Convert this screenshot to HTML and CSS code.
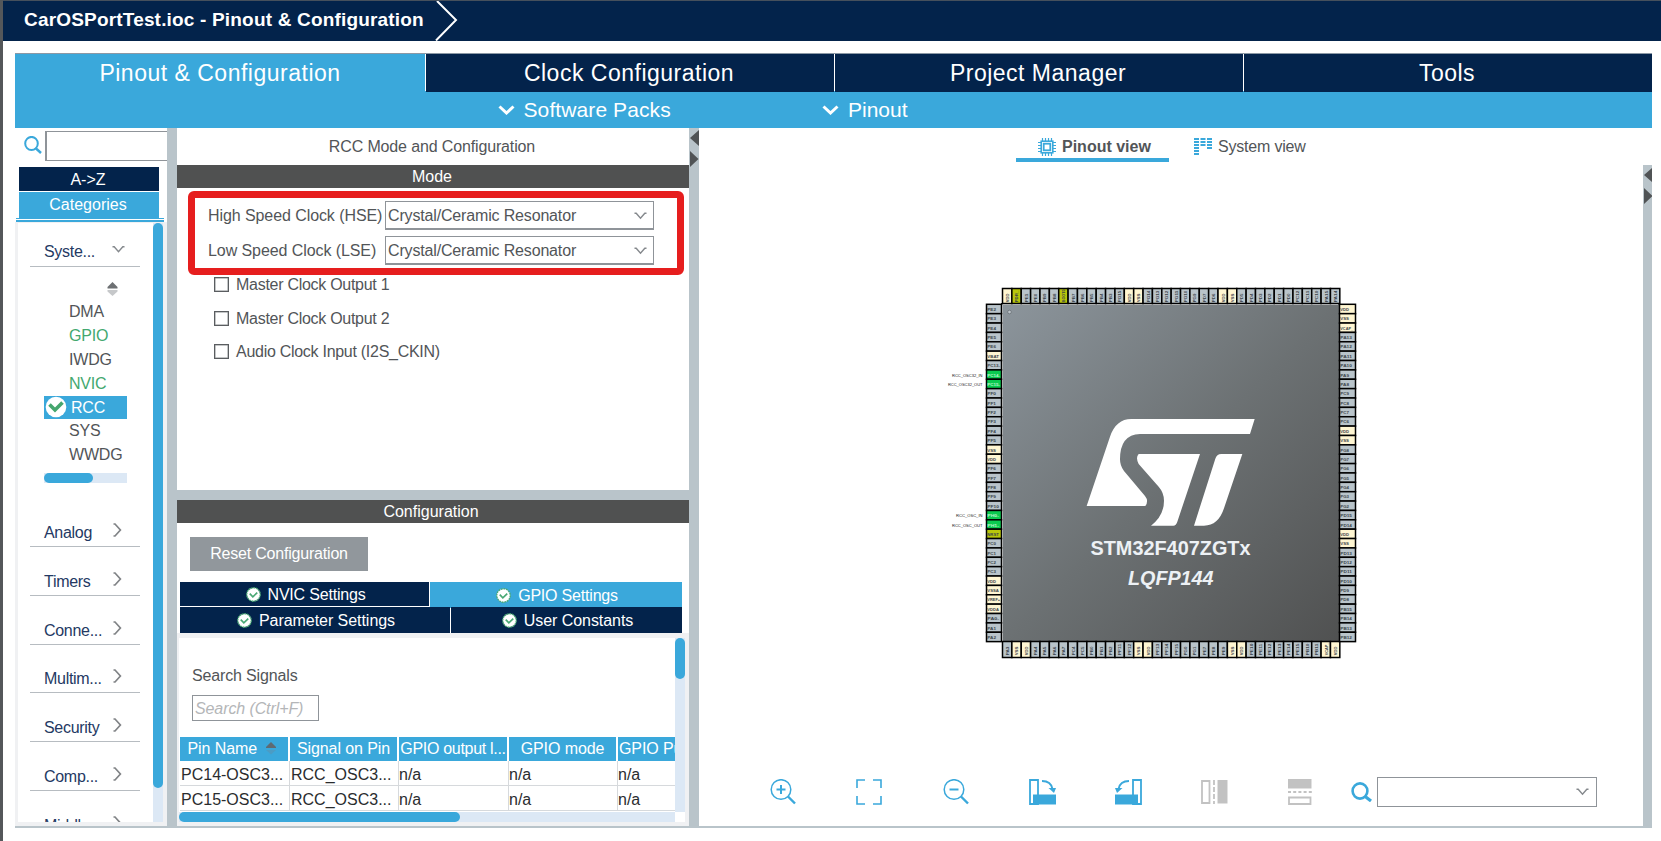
FILE: index.html
```
<!DOCTYPE html>
<html lang="en">
<head>
<meta charset="utf-8">
<title>CarOSPortTest.ioc - Pinout &amp; Configuration</title>
<link rel="stylesheet" href="styles.css">
</head>
<body>
<svg class="defs" width="0" height="0">
  <symbol id="down" viewBox="0 0 13 7"><path d="M.5 .8H2.2L6.5 5.8L10.8 .8H12.5" fill="none" stroke="#85898d" stroke-width="1.4"/></symbol>
  <symbol id="right" viewBox="0 0 9 14"><path d="M.5 1H2L7.4 7L2 13H.5" fill="none" stroke="#808386" stroke-width="1.7"/></symbol>
  <symbol id="bold-down" viewBox="0 0 16 10"><path d="M1 1.5L8 8L15 1.5" fill="none" stroke="#fff" stroke-width="3"/></symbol>
  <symbol id="lens" viewBox="0 0 18 18"><ellipse cx="7.5" cy="7.5" rx="6.3" ry="6.6" fill="none" stroke="#3aa8db" stroke-width="2"/><path d="M11.5 12L17 17" stroke="#3aa8db" stroke-width="2.4"/></symbol>
  <symbol id="ok" viewBox="0 0 16 16"><circle cx="8" cy="8" r="7.2" fill="#fff" stroke="#4aa975" stroke-width="1.4" stroke-dasharray="2 .8"/><path d="M4 7L7.3 10.4L12 6" fill="none" stroke="#4aa975" stroke-width="1.8"/></symbol>
  <symbol id="arrows" viewBox="0 0 10 37"><path d="M10 0V16L1 8Z M1 21V37L9.5 29Z" fill="#505355"/></symbol>
</svg>

<header class="titlebar"><h1>CarOSPortTest.ioc - Pinout &amp; Configuration</h1><svg width="24" height="40" viewBox="0 0 24 40"><path d="M3 0L22 19L2 39.5" fill="none" stroke="#fff" stroke-width="2"/></svg></header>

<main class="app">
  <nav class="main-tabs"><a class="active">Pinout &amp; Configuration</a><a>Clock Configuration</a><a>Project Manager</a><a>Tools</a></nav>
  <div class="subbar">
    <span class="packs"><svg width="17" height="10"><use href="#bold-down"/></svg>Software Packs</span>
    <span class="pinout"><svg width="17" height="10"><use href="#bold-down"/></svg>Pinout</span>
  </div>
  <div class="columns">
    <aside class="sidebar">
      <div class="side-search"><svg width="18" height="18"><use href="#lens"/></svg><div class="side-input"></div></div>
      <div class="az">A-&gt;Z</div>
      <div class="cats">Categories</div>
      <div class="cats-line"></div>
      <div class="side-body">
        <div class="list">
          <div class="group first"><span>Syste...</span><svg width="13" height="7"><use href="#down"/></svg></div>
          <svg class="sort" width="11" height="14" viewBox="0 0 11 14"><path d="M5.5 0L10.5 5V6.5H.5V5Z" fill="#6d7073"/><path d="M.5 8H10.5V9.5L5.5 14L.5 9.5Z" fill="#c6c8ca"/></svg>
          <ul class="items">
            <li>DMA</li><li class="green">GPIO</li><li>IWDG</li><li class="green">NVIC</li>
            <li class="sel"><svg width="22" height="22" viewBox="0 0 22 22"><circle cx="11" cy="11" r="10.3" fill="#fff"/><path d="M4.5 8.5L10 14L17.5 6.5" fill="none" stroke="#45a66e" stroke-width="3.6"/></svg>RCC</li>
            <li>SYS</li><li>WWDG</li>
          </ul>
          <div class="mini-track"><div class="thumb"></div></div>
          <div class="group"><span>Analog</span><svg width="9" height="14"><use href="#right"/></svg></div>
          <div class="group"><span>Timers</span><svg width="9" height="14"><use href="#right"/></svg></div>
          <div class="group"><span>Conne...</span><svg width="9" height="14"><use href="#right"/></svg></div>
          <div class="group"><span>Multim...</span><svg width="9" height="14"><use href="#right"/></svg></div>
          <div class="group"><span>Security</span><svg width="9" height="14"><use href="#right"/></svg></div>
          <div class="group"><span>Comp...</span><svg width="9" height="14"><use href="#right"/></svg></div>
          <div class="group"><span>Middle...</span><svg width="9" height="14"><use href="#right"/></svg></div>
        </div>
        <div class="side-track"><div class="thumb"></div></div>
      </div>
    </aside>
    <div class="splitter"></div>
    <section class="config">
      <div class="panel-title">RCC Mode and Configuration</div>
      <div class="bar">Mode</div>
      <div class="mode">
        <div class="clocks">
          <label class="clock"><span>High Speed Clock (HSE)</span><div class="select">Crystal/Ceramic Resonator<svg width="13" height="8"><use href="#down"/></svg></div></label>
          <label class="clock"><span>Low Speed Clock (LSE)</span><div class="select">Crystal/Ceramic Resonator<svg width="13" height="8"><use href="#down"/></svg></div></label>
        </div>
        <div class="check"><i></i>Master Clock Output 1</div>
        <div class="check"><i></i>Master Clock Output 2</div>
        <div class="check"><i></i>Audio Clock Input (I2S_CKIN)</div>
      </div>
      <div class="hsplit"></div>
      <div class="bar lower">Configuration</div>
      <div class="settings">
        <div class="reset">Reset Configuration</div>
        <div class="tabrow one"><div><svg width="15" height="15"><use href="#ok"/></svg>NVIC Settings</div><div class="on"><svg width="15" height="15"><use href="#ok"/></svg>GPIO Settings</div></div>
        <div class="tabrow two"><div><svg width="15" height="15"><use href="#ok"/></svg>Parameter Settings</div><div><svg width="15" height="15"><use href="#ok"/></svg>User Constants</div></div>
        <div class="tabpane">
          <div class="scrollpane">
            <div class="sig-label">Search Signals</div>
            <div class="sig-input">Search (Ctrl+F)</div>
            <div class="grid head"><div class="sorted">Pin Name<svg width="10" height="13" viewBox="0 0 10 13"><path d="M5 0L10 5V6H0V5Z" fill="#5f6b73"/><path d="M0 8H10L5 12.5Z" fill="#4c9cc4"/></svg></div><div>Signal on Pin</div><div class="tight">GPIO output l...</div><div>GPIO mode</div><div class="cut">GPIO Pull-up</div></div>
            <div class="grid row"><div>PC14-OSC3...</div><div>RCC_OSC3...</div><div>n/a</div><div>n/a</div><div>n/a</div></div>
            <div class="grid row"><div>PC15-OSC3...</div><div>RCC_OSC3...</div><div>n/a</div><div>n/a</div><div>n/a</div></div>
          </div>
          <div class="vtrack"><div class="thumb"></div></div>
          <div class="htrack"><div class="thumb"></div></div>
          <div class="corner"></div>
        </div>
      </div>
    </section>
    <div class="splitter"><svg class="grip" width="10" height="37"><use href="#arrows"/></svg></div>
    <section class="view">
      <div class="view-tabs">
        <div class="vt active">
          <svg width="18" height="18" viewBox="0 0 18 18" fill="none" stroke="#3aa8db"><path d="M4.5 0V18M7.5 0V18M10.5 0V18M13.5 0V18M0 4.5H18M0 7.5H18M0 10.5H18M0 13.5H18" stroke-width="1.2"/><rect x="3.2" y="3.2" width="11.6" height="11.6" fill="#fff" stroke-width="1.6"/><rect x="5.7" y="5.7" width="6.6" height="6.6" stroke-width="1.8"/></svg>Pinout view</div>
        <div class="vt">
          <svg width="18" height="18" viewBox="0 0 18 18" fill="none" stroke="#3aa8db" stroke-width="5"><path d="M2.5 0V17M9 0V9M15.5 0V12" stroke-dasharray="2 1"/></svg>System view</div>
      </div>
      <svg class="chip" id="chip" width="412" height="374" viewBox="946 286 412 374">
        <defs><linearGradient id="body" x1="0" y1="0" x2="1" y2="1"><stop offset="0" stop-color="#8c959c"/><stop offset=".5" stop-color="#6c7173"/><stop offset="1" stop-color="#505151"/></linearGradient></defs>
        <rect x="1001.5" y="303.5" width="338" height="338" fill="url(#body)" stroke="#000"/>
        <path d="M1002.5 641V304.5H1338" fill="none" stroke="#e4e7e9"/>
        <circle cx="1009.5" cy="312" r="1.8" fill="#bcc4ca" stroke="#5c6266" stroke-width=".6"/>
        <g transform="translate(1060 400) scale(.33333)" fill="#fff">
          <path d="M80 318L150 110Q168 57 214 57H584L570 102H240Q180 104 180 178Q180 198 192 213L255 288Q267 303 256 318Z"/>
          <path d="M236 162H420L352 365Q348 377 340 377H273Q312 347 312 302Q312 278 296 260L236 192Q226 173 236 162Z"/>
          <path d="M484 162H547L492 325Q475 377 432 377H402L466 176Q470 162 484 162Z"/>
        </g>
        <text class="part" x="1090.5" y="555" textLength="160" lengthAdjust="spacingAndGlyphs">STM32F407ZGTx</text>
        <text class="pkg" x="1128" y="585" textLength="85.5" lengthAdjust="spacingAndGlyphs">LQFP144</text>
      </svg>
      <div class="tools">
        <svg width="26" height="26" viewBox="0 0 26 26" fill="none" stroke="#3aa8db" stroke-width="1.5"><circle cx="11" cy="10.5" r="9.8"/><path d="M6.5 10.5H15.5M11 6V15" stroke-width="2"/><path d="M18 17.5L25 24.5" stroke-width="2.4"/></svg>
        <svg width="26" height="26" viewBox="0 0 26 26" fill="none" stroke="#3aa8db" stroke-width="1.6"><path d="M1 9V1H9M17 1H25V9M25 17V25H17M9 25H1V17"/></svg>
        <svg width="26" height="26" viewBox="0 0 26 26" fill="none" stroke="#3aa8db" stroke-width="1.5"><circle cx="11" cy="10.5" r="9.8"/><path d="M6.5 10.5H15.5" stroke-width="2"/><path d="M18 17.5L25 24.5" stroke-width="2.4"/></svg>
        <svg width="27" height="26" viewBox="0 0 27 26" fill="none" stroke="#3aa8db" stroke-width="1.8"><path d="M1 1H9V25H1Z"/><path d="M4 15.5H27V25.5H4Z" fill="#3aa8db" stroke="none"/><path d="M13 2Q22 2 23.5 10"/><path d="M19.5 9H27L25 14Z" fill="#3aa8db" stroke="none"/></svg>
        <svg width="27" height="26" viewBox="0 0 27 26" fill="none" stroke="#3aa8db" stroke-width="1.8"><path d="M18 1H26V25H18Z"/><path d="M0 15.5H23V25.5H0Z" fill="#3aa8db" stroke="none"/><path d="M14 2Q5 2 3.5 10"/><path d="M0 9H7.5L2 14Z" fill="#3aa8db" stroke="none"/></svg>
        <svg width="27" height="26" viewBox="0 0 27 26" fill="none" stroke="#c2c2c2" stroke-width="1.8"><path d="M1 2H8.5V24H1Z"/><path d="M13 1V25" stroke-dasharray="5 2"/><path d="M16.5 1H26.5V24.5H16.5Z" fill="#c2c2c2" stroke="none"/></svg>
        <svg width="24" height="26" viewBox="0 0 24 26" fill="none" stroke="#c2c2c2" stroke-width="1.8"><path d="M1 18.5H22.5V25H1Z"/><path d="M0 13H24" stroke-dasharray="3 2.2"/><path d="M0 0H23.5V9.5H0Z" fill="#c2c2c2" stroke="none"/></svg>
        <svg width="21" height="20" viewBox="0 0 21 20" fill="none" stroke="#3aa8db"><ellipse cx="9" cy="9" rx="7.4" ry="7.6" stroke-width="2.6"/><path d="M13.5 14L20 19" stroke-width="3.2"/></svg>
        <div class="combo"><svg width="13" height="8"><use href="#down"/></svg></div>
      </div>
    </section>
    <div class="edge"><svg class="grip" width="10" height="37"><use href="#arrows"/></svg></div>
  </div>
</main>
<script src="pins.js"></script>
</body>
</html>
```

FILE: styles.css
```
* { box-sizing: border-box; }
body { margin: 0; width: 1661px; height: 841px; overflow: hidden; background: #fff; border-left: 3px solid #54575a; font: 16px "Liberation Sans", Arial, sans-serif; color: #525558; white-space: nowrap; }
svg { display: block; flex: none; }
.defs { position: absolute; }
.titlebar { height: 41px; background: #03234b; border-top: 1px solid #46505c; display: flex; padding-left: 21px; }
.titlebar h1 { margin: 0; width: 410px; font-size: 19px; line-height: 38px; letter-spacing: .18px; color: #fff; }
.app { margin: 12px 9px 0 12px; height: 775px; border-bottom: 2px solid #b9c4ca; }
.main-tabs { display: grid; grid-template-columns: 410px 408px 408px 408px; column-gap: 1px; height: 38px; border-top: 1px solid #8b98a5; }
.main-tabs a { background: #03234b; color: #fff; font-size: 23px; letter-spacing: .5px; line-height: 38px; text-align: center; padding-right: 2px; }
.main-tabs a.active { background: #3aa8db; padding: 0; }
.subbar { height: 37px; background: #3aa8db; color: #fff; display: flex; font-size: 21px; line-height: 37px; letter-spacing: .1px; }
.subbar span { display: flex; align-items: center; gap: 9px; }
.packs { margin-left: 482.5px; width: 324.5px; }
.pinout { letter-spacing: 0; }
.columns { display: flex; height: 698px; }

.sidebar { width: 152px; overflow: hidden; }
.side-search { display: flex; height: 39px; padding: 3px 0 0 9px; gap: 3px; }
.side-search svg { margin-top: 5px; }
.side-input { width: 122px; height: 30px; border: 1px solid #8f9499; border-left-width: 2px; border-right: 0; }
.az, .cats { margin-left: 4px; width: 140px; text-align: center; color: #fff; padding-right: 2px; }
.az { height: 24px; line-height: 26px; background: #03234b; margin-bottom: 1px; font-size: 16px; }
.cats { height: 26px; line-height: 26px; background: #3aa8db; font-size: 16px; }
.cats-line { margin-left: 1px; width: 148px; height: 4px; border-top: 1px solid #3aa8db; border-bottom: 2px solid #3aa8db; }
.side-body { display: flex; height: 604px; border: solid #f0f1f3; border-width: 1px 4px 4px 3px; }
.list { width: 135px; height: 599px; overflow: hidden; padding: 14px 0 0 12px; }
.side-track { width: 10px; background: #dce8f5; }
.thumb { background: #3aa8db; border-radius: 5px; }
.side-track .thumb { height: 565px; }
.group { width: 110px; height: 30px; margin-bottom: 18.8px; border-bottom: 1px solid #b7bcc1; padding-left: 14px; display: flex; justify-content: space-between; color: #243963; line-height: 31px; letter-spacing: -.3px; }
.group svg { margin: 6px 18px 0 0; }
.group.first { margin-bottom: 15px; line-height: 30px; }
.group.first svg { margin: 9px 15px 0 0; }
.sort { margin-left: 77px; }
.items { list-style: none; margin: 4px 0 0 14px; padding: 0; width: 83px; }
.items li { height: 24px; line-height: 24px; padding-left: 25px; letter-spacing: -.2px; }
.items .green { color: #43a86f; }
.items .sel { height: 23px; line-height: 23px; background: #3aa8db; color: #fff; padding-left: 1px; display: flex; gap: 4px; }
.mini-track { margin: 6px 0 34px 14px; width: 83px; height: 10px; background: #dce8f5; }
.mini-track .thumb { width: 49px; height: 10px; }

.splitter { width: 10px; background: #b9c4ca; }
.grip { margin-top: 2px; }
.config { width: 512px; overflow: hidden; }
.panel-title { height: 37px; line-height: 37px; text-align: center; letter-spacing: -.14px; padding-right: 2px; }
.bar { height: 23px; line-height: 23px; background: #505151; color: #fff; text-align: center; padding-right: 2px; }
.bar.lower { padding-right: 4px; }
.mode { height: 302px; padding: 3px 0 0 11px; }
.clocks { width: 496px; height: 84px; border: 7px solid #e61e1e; border-radius: 6px; padding: 3px 0 0 13px; display: grid; gap: 6px; align-content: start; }
.clock { display: grid; grid-template-columns: 177px 269px; height: 29px; line-height: 30px; letter-spacing: -.08px; }
.select { border: 1px solid #8f9499; border-bottom-width: 2px; padding: 0 6px 0 2px; display: flex; justify-content: space-between; line-height: 28px; letter-spacing: -.16px; height: 29px; }
.select svg { margin-top: 10px; }
.check { display: flex; height: 33.6px; align-items: flex-start; gap: 7px; padding: 2px 0 0 26px; line-height: 16px; letter-spacing: -.28px; }
.check i { width: 15px; height: 15px; border: 1px solid #5a5d60; box-shadow: inset 0 0 0 .5px #8a8d90; }
.hsplit { height: 10px; background: #b9c4ca; }
.settings { height: 303px; padding-top: 14px; }
.reset { margin: 0 0 11px 13px; width: 178px; height: 34px; line-height: 34px; background: #91979c; color: #fff; text-align: center; letter-spacing: -.2px; }
.tabrow { margin-left: 3px; width: 502px; display: grid; column-gap: 1px; color: #fff; letter-spacing: -.2px; }
.tabrow div { background: #03234b; display: flex; justify-content: center; align-items: center; gap: 7px; height: 24px; padding: 2px 0 0 2px; }
.tabrow svg { margin-top: -2px; }
.tabrow.one { grid-template-columns: 249px 252px; height: 25px; }
.tabrow.two { grid-template-columns: 270px 231px; height: 26px; letter-spacing: -.05px; }
.tabrow.two div { height: 26px; }
.tabrow .on { background: #3aa8db; height: 26px; }
.tabpane { display: grid; grid-template-columns: 496px 10px; grid-template-rows: 174px 10px; border: solid #f0f1f3; border-width: 5px 4px 4px 2px; }
.scrollpane { overflow: hidden; padding: 27px 0 0 1px; }
.sig-label { margin-left: 12px; line-height: 21px; height: 20px; letter-spacing: -.15px; }
.sig-input { margin: 10px 0 16px 12px; width: 127px; height: 26px; line-height: 25px; border: 1px solid #8f9499; padding-left: 2px; color: #b4b6b8; font-style: italic; letter-spacing: -.1px; }
.grid { display: grid; grid-template-columns: 110px 109px 110px 109px 100px; }
.head div { height: 24px; line-height: 24px; margin-right: 2px; background: #3aa8db; color: #fff; text-align: center; letter-spacing: -.1px; }
.head .tight { letter-spacing: -.3px; }
.head .sorted { display: flex; justify-content: flex-end; padding-right: 12px; gap: 9px; }
.head svg { margin-top: 5px; }
.head .cut { text-align: left; padding-left: 1px; }
.row { color: #2a2c2e; line-height: 27px; height: 25px; border-bottom: 1px solid #d6d9dc; }
.row div { padding-left: 1px; height: 24px; border-right: 1px solid #d6d9dc; overflow: hidden; }
.row div:nth-child(n+3) { padding-left: 0; }
.vtrack, .htrack { background: #dce8f5; }
.vtrack .thumb { height: 41px; }
.htrack .thumb { width: 281px; height: 10px; }

.view { width: 944px; }
.view-tabs { display: flex; gap: 18px; margin-left: 317px; height: 34px; }
.vt { display: flex; align-items: center; gap: 6px; padding: 3px 18px 0 7px; letter-spacing: -.2px; }
.vt.active { width: 153px; padding-left: 22px; font-weight: bold; border-bottom: 4px solid #3aa8db; padding-top: 7px; letter-spacing: 0; }
.chip { margin: 124px 0 0 247px; }
.part { font: bold 19.5px "Liberation Sans", Arial, sans-serif; fill: #edf1f5; }
.pkg { font: italic bold 19.5px "Liberation Sans", Arial, sans-serif; fill: #edf1f5; }
.pin { font: bold 4.3px "Liberation Sans", Arial, sans-serif; }
.signal { font: 4.4px "Liberation Sans", Arial, sans-serif; fill: #222; }
.tools { display: flex; align-items: center; margin: 116px 0 0 71px; height: 32px; }
.tools svg + svg { margin-left: 60.3px; }
.tools svg:nth-of-type(5) { margin-left: 59px; }
.tools svg:nth-of-type(6) { margin-left: 59px; }
.tools svg:nth-of-type(8) { margin-left: 39px; }
.tools .combo { width: 220px; height: 30px; border: 1px solid #8f9499; margin-left: 4.5px; display: flex; align-items: center; justify-content: flex-end; padding-right: 7px; }
.tools .combo svg { margin: 0; }
.edge { width: 9px; margin-top: 37px; background: #b9c4ca; overflow: hidden; }
```

FILE: pins.js
```
const sides = {
  left: "PE2 PE3 PE4 PE5 PE6 VBAT PC13- PC14- PC15- PF0 PF1 PF2 PF3 PF4 PF5 VSS VDD PF6 PF7 PF8 PF9 PF10 PH0- PH1- NRST PC0 PC1 PC2 PC3 VDD VSSA VREF+ VDDA PA0- PA1 PA2",
  bottom: "PA3 VSS VDD PA4 PA5 PA6 PA7 PC4 PC5 PB0 PB1 PB2 PF11 PF12 VSS VDD PF13 PF14 PF15 PG0 PG1 PE7 PE8 PE9 VSS VDD PE10 PE11 PE12 PE13 PE14 PE15 PB10 PB11 VCAP_ VDD",
  right: "VDD VSS VCAP_ PA13 PA12 PA11 PA10 PA9 PA8 PC9 PC8 PC7 PC6 VDD VSS PG8 PG7 PG6 PG5 PG4 PG3 PG2 PD15 PD14 VDD VSS PD13 PD12 PD11 PD10 PD9 PD8 PB15 PB14 PB13 PB12",
  top: "VDD PDR_ PE1 PE0 PB9 PB8 BOOT0 PB7 PB6 PB5 PB4 PB3 PG15 VDD VSS PG14 PG13 PG12 PG11 PG10 PG9 PD7 PD6 VDD VSS PD5 PD4 PD3 PD2 PD1 PD0 PC12 PC11 PC10 PA15 PA14"
};
const chip = document.getElementById("chip");
const pitch = 9.37;

function add(name, attrs, text) {
  const el = document.createElementNS("http://www.w3.org/2000/svg", name);
  for (const key in attrs) el.setAttribute(key, attrs[key]);
  if (text) el.textContent = text;
  chip.appendChild(el);
}

function fillFor(label) {
  if (/^V/.test(label)) return "#fff6d2";
  if (/^(NRST|BOOT0|PDR)/.test(label)) return "#b9c70a";
  if (/^(PC14|PC15|PH0|PH1)-/.test(label)) return "#0acb50";
  return "#b9c4ca";
}

for (const [side, list] of Object.entries(sides)) {
  list.split(" ").forEach((label, i) => {
    const fill = fillFor(label);
    const ink = fill === "#0acb50" ? "#b8f5c8" : "#3c444b";
    const fit = { class: "pin", fill: ink, textLength: Math.min(label.length * 2.9, 12.8), lengthAdjust: "spacingAndGlyphs" };
    if (side === "left" || side === "right") {
      const x = side === "left" ? 986.5 : 1339.5;
      const y = 304.3 + i * pitch;
      add("rect", { x, y, width: side === "left" ? 15 : 16, height: pitch, fill, stroke: "#000", "stroke-width": 1.5 });
      add("text", { ...fit, x: x + 0.8, y: y + 6.7 }, label);
    } else {
      const x = 1002.5 + i * pitch;
      const y = side === "top" ? 288.5 : 641.5;
      add("rect", { x, y, width: pitch, height: side === "top" ? 15 : 16, fill, stroke: "#000", "stroke-width": 1.5 });
      add("text", { ...fit, transform: `translate(${x + 6.5} ${y + 13.8}) rotate(-90)` }, label);
    }
  });
}

[["RCC_OSC32_IN", 952, 377.2], ["RCC_OSC32_OUT", 948, 386.2], ["RCC_OSC_IN", 956, 517.2], ["RCC_OSC_OUT", 952, 527.2]].forEach(([label, x, y]) => {
  add("text", { class: "signal", x, y, textLength: 982.5 - x, lengthAdjust: "spacingAndGlyphs" }, label);
});
```
